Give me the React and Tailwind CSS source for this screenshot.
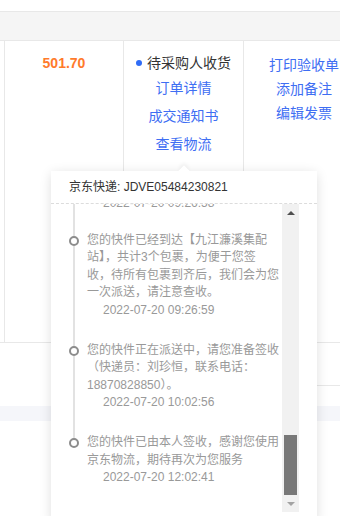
import React from "react";

const font = { fontFamily: '"Liberation Sans", "Noto Sans CJK SC", sans-serif' };

// 物流轨迹（只显示滚动到底部的部分）
const traces = [
    { lines: ["您的快件已由【江西南昌分拣中心】", "发往【九江濂溪集配站】"], time: "2022-07-20 05:12:33" },
    { lines: ["您的快件已到达【九江濂溪集配站】"], time: "2022-07-20 08:41:10" },
    { lines: ["您的快件在【九江濂溪集配站】进行", "分拣"], time: "2022-07-20 09:26:58", tight: true },
    {
        lines: ["您的快件已经到达【九江濂溪集配", "站】，共计3个包裹，为便于您签", "收，待所有包裹到齐后，我们会为您", "一次派送，请注意查收。"],
        time: "2022-07-20 09:26:59",
    },
    { lines: ["您的快件正在派送中，请您准备签收", "（快递员：刘珍恒，联系电话：", "18870828850）。"], time: "2022-07-20 10:02:56" },
    { lines: ["您的快件已由本人签收，感谢您使用", "京东物流，期待再次为您服务"], time: "2022-07-20 12:02:41" },
];

const TraceItem = ({ lines, time, last, tight }) => {
    return (
        <div className="flex">
            <div className="flex w-[10px] shrink-0 flex-col items-center">
                <div className="h-[4px] w-[2px] bg-[#e2e2e2]" />
                <div className="h-[10px] w-[10px] shrink-0 rounded-full border-2 border-[#8c8c8c] bg-white" />
                {!last && <div className="w-[2px] flex-1 bg-[#e2e2e2]" />}
            </div>
            <div className={`ml-[8px] text-[12px] leading-[17.5px] text-[#999] ${tight ? "pb-[19px]" : "pb-[22.5px]"}`}>
                {lines.map((line, i) => (
                    <div key={i} className="whitespace-nowrap">{line}</div>
                ))}
                <div className="whitespace-nowrap pl-4">{time}</div>
            </div>
        </div>
    );
};

const ScrollBar = () => {
    return (
        <div className="flex w-[17px] shrink-0 flex-col bg-[#f1f1f1]">
            <div className="flex h-[17px] items-center justify-center">
                <div className="h-0 w-0 border-x-[4px] border-b-[4px] border-x-transparent border-b-[#505050]" />
            </div>
            <div className="flex flex-1 flex-col justify-end px-[2px]">
                <div className="h-[60px] bg-[#787878]" />
            </div>
            <div className="flex h-[17px] items-center justify-center">
                <div className="h-0 w-0 border-x-[4px] border-t-[4px] border-x-transparent border-t-[#a3a3a3]" />
            </div>
        </div>
    );
};

const LogisticsPopover = () => {
    return (
        <div className="absolute left-[51px] top-[171px] w-[266px] rounded-[4px] bg-white pb-3 shadow-[0_2px_12px_rgba(0,0,0,0.13)]">
            {/* arrow */}
            <div className="absolute left-[129px] top-[-4px] h-[8px] w-[8px] rotate-45 bg-white shadow-[-2px_-2px_4px_rgba(0,0,0,0.05)]" />
            <div className="relative flex h-[33px] items-center border-b border-dashed border-[#dcdcdc] bg-white px-[18px] text-[12px] text-[#333]">
                京东快递: JDVE05484230821
            </div>
            <div className="flex h-[308px] px-[18px]">
                <div className="flex flex-1 flex-col justify-end overflow-hidden pb-[3px]">
                    {traces.map((t, i) => (
                        <TraceItem key={i} lines={t.lines} time={t.time} tight={t.tight} last={i === traces.length - 1} />
                    ))}
                </div>
                <ScrollBar />
            </div>
        </div>
    );
};

export default function App() {
    return (
        <div className="relative h-[516px] w-[340px] overflow-hidden bg-white" style={font}>
            <div className="h-[11px]" />
            <div className="h-[30px] border-y border-[#e8e8e8] bg-[#f5f5f5]" />

            {/* order row */}
            <div className="flex h-[302px] border-b border-[#e8e8e8]">
                <div className="w-[5px] shrink-0 border-r border-[#e8e8e8]" />
                <div className="flex w-[119px] shrink-0 flex-col items-center border-r border-[#e8e8e8] pt-[12px]">
                    <div className="text-[14px] font-bold leading-[20px] text-[#ff7a2b]">501.70</div>
                </div>
                <div className="flex w-[120px] shrink-0 flex-col items-center border-r border-[#e8e8e8] pt-[12px] text-[14px]">
                    <div className="flex items-center leading-[20px] text-[#333]">
                        <span className="mr-[5px] h-[6px] w-[6px] rounded-full bg-[#2f6cf6]" />
                        待采购人收货
                    </div>
                    <div className="mt-[1px] flex flex-col items-center leading-[28px] text-[#3e6ef3]">
                        <span>订单详情</span>
                        <span>成交通知书</span>
                        <span>查看物流</span>
                    </div>
                </div>
                <div className="flex w-[120px] shrink-0 flex-col items-center pt-[12px] text-[14px] leading-[24px] text-[#3e6ef3]">
                    <span>打印验收单</span>
                    <span>添加备注</span>
                    <span>编辑发票</span>
                </div>
            </div>

            <div className="flex h-[43px]">
                <div className="w-[184px] shrink-0" />
                <div className="flex-1 border-b border-[#e8e8e8]" />
            </div>
            <div className="h-[20px]" />
            <div className="h-[15px] bg-[#f5f6fa]" />

            <LogisticsPopover />
        </div>
    );
}
